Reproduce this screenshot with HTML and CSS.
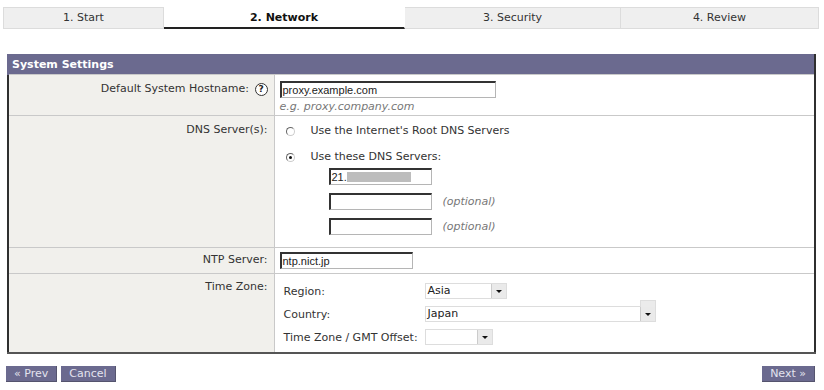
FILE: index.html
```html
<!DOCTYPE html>
<html lang="en">
<head>
    <meta charset="UTF-8">
    <title>System Setup Wizard</title>
    <link rel="stylesheet" href="styles.css">
</head>
<body>
    <div class="steps">
        <div class="step step-1">1. Start</div>
        <div class="step step-2 current">2. Network</div>
        <div class="step step-3">3. Security</div>
        <div class="step step-4">4. Review</div>
    </div>

    <table class="settings">
        <tr>
            <th colspan="2" class="settings-title">System Settings</th>
        </tr>
        <tr class="row-hostname">
            <td class="label">Default System Hostname: <span class="help">?</span></td>
            <td class="field">
                <div class="textbox hostname">proxy.example.com</div>
                <div class="hint">e.g. proxy.company.com</div>
            </td>
        </tr>
        <tr class="row-dns">
            <td class="label">DNS Server(s):</td>
            <td class="field">
                <div class="radio-line"><span class="radio"></span>Use the Internet's Root DNS Servers</div>
                <div class="radio-line"><span class="radio checked"></span>Use these DNS Servers:</div>
                <div class="dns-list">
                    <div class="dns-line"><div class="textbox dns">21.<span class="masked"></span></div></div>
                    <div class="dns-line"><div class="textbox dns"></div><span class="optional">(optional)</span></div>
                    <div class="dns-line"><div class="textbox dns"></div><span class="optional">(optional)</span></div>
                </div>
            </td>
        </tr>
        <tr class="row-ntp">
            <td class="label">NTP Server:</td>
            <td class="field">
                <div class="textbox ntp">ntp.nict.jp</div>
            </td>
        </tr>
        <tr class="row-tz">
            <td class="label">Time Zone:</td>
            <td class="field">
                <div class="tz-grid">
                    <span>Region:</span>
                    <div class="select region"><span class="select-value">Asia</span><span class="select-arrow"></span></div>
                    <span>Country:</span>
                    <div class="select country"><span class="select-value">Japan</span><span class="select-arrow"></span><span class="scroll-nub"></span></div>
                    <span>Time Zone / GMT Offset:</span>
                    <div class="select offset"><span class="select-value"></span><span class="select-arrow"></span></div>
                </div>
            </td>
        </tr>
    </table>

    <div class="actions">
        <div class="actions-left">
            <button class="btn">&laquo; Prev</button>
            <button class="btn">Cancel</button>
        </div>
        <button class="btn">Next &raquo;</button>
    </div>
</body>
</html>
```

FILE: styles.css
```css
body {
    margin: 0;
    font-family: "DejaVu Sans", Verdana, sans-serif;
    font-size: 11px;
    color: #333;
    background-color: #fff;
}

/* wizard steps */
.steps {
    display: flex;
    margin: 7px 0 0 3px;
}
.step {
    height: 20px;
    line-height: 20px;
    text-align: center;
    background-color: #efefef;
    border: 1px solid #dcdcdc;
    border-left: none;
    color: #333;
}
.step-1 { width: 159px; border-left: 1px solid #dcdcdc; }
.step-2 { width: 240px; }
.step-3 { width: 215px; }
.step-4 { width: 197px; }
.step.current {
    background-color: #fff;
    border-color: #fff;
    border-bottom: 2px solid #222;
    height: 19px;
    line-height: 19px;
    font-weight: bold;
    color: #111;
}

/* settings table */
.settings {
    margin: 25px 0 0 7px;
    width: 809px;
    border-collapse: collapse;
    border-left: 2px solid #2f2f2f;
    border-right: 2px solid #2f2f2f;
    border-bottom: 2px solid #555;
}
.settings td {
    box-sizing: border-box;
    padding: 0;
    vertical-align: top;
    border-top: 1px solid #c9c9c9;
}
.settings-title {
    background-color: #6b6a8f;
    color: #fff;
    text-align: left;
    font-size: 11px;
    height: 20px;
    padding: 0 0 0 3px;
    border-left: 2px solid #6b6a8f;
}
.label {
    width: 266px;
    background-color: #f1f0ec;
    text-align: right;
    padding: 7px 6px 0 0 !important;
    border-right: 1px solid #c9c9c9;
    color: #333;
}
.field {
    padding: 6px 0 0 5px !important;
}
.row-hostname td { height: 41px; }
.row-dns td { height: 132px; }
.row-ntp td { height: 26px; }
.row-tz td { height: 79px; }
.row-ntp .field { padding-top: 4px !important; }
.row-ntp .label { padding-top: 5px !important; }
.row-tz .label { padding-top: 6px !important; }

.help {
    display: inline-block;
    width: 11px;
    height: 11px;
    line-height: 11px;
    border: 1px solid #333;
    border-radius: 50%;
    text-align: center;
    font-weight: bold;
    font-size: 9px;
    margin-left: 2px;
    background-color: #fff;
    color: #222;
    vertical-align: 0;
}

.textbox {
    box-sizing: border-box;
    height: 17px;
    line-height: 14px;
    border: 1px solid #b5b5b5;
    border-top: 2px solid #333;
    border-left: 2px solid #333;
    padding-left: 1px;
    font-family: "Liberation Sans", Arial, sans-serif;
    font-size: 11px;
    color: #222;
    background-color: #fff;
}
.textbox.hostname { width: 216px; }
.textbox.ntp { width: 133px; }
.textbox.dns { width: 103px; }
.hint {
    margin-top: 2px;
    color: #777;
    font-style: italic;
}

.radio-line {
    display: flex;
    align-items: center;
    height: 13px;
    margin: 2px 0 13px 0;
    color: #333;
}
.radio-line + .radio-line { margin-bottom: 5px; }
.radio {
    box-sizing: border-box;
    width: 9px;
    height: 9px;
    margin: 2px 16px 0 6px;
    border-radius: 50%;
    border: 1px solid #ccc;
    border-top-color: #666;
    border-left-color: #666;
    position: relative;
}
.radio.checked::after {
    content: "";
    position: absolute;
    left: 2px;
    top: 2px;
    width: 3px;
    height: 3px;
    border-radius: 50%;
    background-color: #111;
}

.dns-list {
    margin-left: 49px;
    display: flex;
    flex-direction: column;
    gap: 8px;
}
.dns-line {
    display: flex;
    align-items: center;
}
.masked {
    display: inline-block;
    width: 64px;
    height: 10px;
    background-color: #bdbdbd;
    vertical-align: -1px;
}
.optional {
    margin-left: 11px;
    color: #777;
    font-style: italic;
}

/* time zone */
.tz-grid {
    display: grid;
    grid-template-columns: 141px auto;
    grid-auto-rows: 16px;
    row-gap: 7px;
    align-items: center;
    justify-items: start;
    padding: 3px 0 0 4px;
}
.select {
    box-sizing: border-box;
    height: 16px;
    display: flex;
    border: 1px solid #ddd;
    background-color: #fff;
    position: relative;
}
.select.region { width: 82px; }
.select.country { width: 231px; }
.select.offset { width: 68px; }
.select-value {
    flex: 1;
    padding-left: 2px;
    line-height: 14px;
    color: #222;
}
.select-arrow {
    width: 14px;
    height: 14px;
    background-color: #eaeaea;
    border-left: 1px solid #ccc;
    position: relative;
}
.select-arrow::after {
    content: "";
    position: absolute;
    left: 4px;
    top: 6px;
    border-left: 3px solid transparent;
    border-right: 3px solid transparent;
    border-top: 3px solid #111;
}
.scroll-nub {
    position: absolute;
    right: -1px;
    top: -7px;
    width: 14px;
    height: 6px;
    background-color: #ebebeb;
    border: 1px solid #ddd;
    border-bottom: none;
}

/* buttons */
.actions {
    display: flex;
    justify-content: space-between;
    width: 809px;
    margin: 12px 0 0 6px;
}
.actions-left {
    display: flex;
    gap: 4px;
}
.btn {
    height: 16px;
    padding: 0 8px;
    border: none;
    border-bottom: 1px solid #55546e;
    border-right: 1px solid #55546e;
    background-color: #6b6a8f;
    color: #e3e3ee;
    font-family: "DejaVu Sans", Verdana, sans-serif;
    font-size: 11px;
    line-height: 15px;
}
```
